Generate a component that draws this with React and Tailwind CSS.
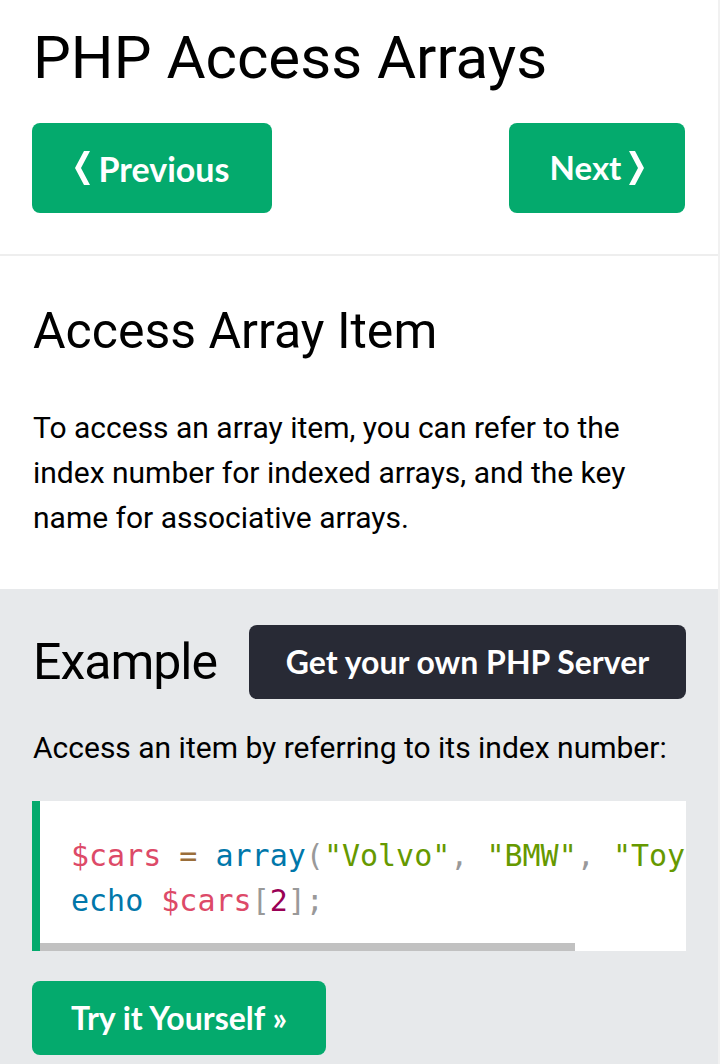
import React from "react";

const btnFont = { fontFamily: "Lato, 'Open Sans', sans-serif" };

function ChevL() {
  return (
    <svg width="15" height="34" viewBox="0 0 15 34" className="shrink-0">
      <polygon points="15,0 9,0 0,17 9,34 15,34 6,17" fill="white" />
    </svg>
  );
}
function ChevR() {
  return (
    <svg width="15" height="34" viewBox="0 0 15 34" className="shrink-0">
      <polygon points="0,0 6,0 15,17 6,34 0,34 9,17" fill="white" />
    </svg>
  );
}

export default function App() {
  return (
    <div className="flex w-[720px] min-h-[1064px] bg-white" style={{ fontFamily: "Roboto, 'Liberation Sans', sans-serif" }}>
      <div className="w-[718px] flex flex-col">
        <div className="px-[33px] pt-[22px] pb-[41px]">
          <h1 className="text-[60px] leading-[72px] font-normal text-black">PHP Access Arrays</h1>
          <div className="mt-[29px] flex justify-between">
            <button className="-ml-px w-[240px] h-[90px] rounded-[8px] bg-[#04AA6D] text-white text-[34px] font-bold flex items-center justify-center gap-[9px]" style={btnFont}>
              <ChevL />
              <span>Previous</span>
            </button>
            <button className="w-[176px] h-[90px] rounded-[8px] bg-[#04AA6D] text-white text-[33px] font-bold flex items-center justify-center gap-[8px]" style={btnFont}>
              <span>Next</span>
              <ChevR />
            </button>
          </div>
        </div>
        <div className="h-[2px] bg-[#eeeeee]" />
        <div className="px-[33px] pt-[44px] pb-[49px]">
          <h2 className="text-[50px] leading-[62px] font-normal text-black">Access Array Item</h2>
          <p className="mt-[43px] text-[30px] leading-[45px] text-black">
            To access an array item, you can refer to the index number for indexed arrays, and the key name for associative arrays.
          </p>
        </div>
        <div className="flex-1 bg-[#E7E9EB] px-[32px] pt-[36px] pb-[8px]">
          <div className="flex items-center justify-between">
            <h2 className="pl-px text-[50px] leading-[62px] tracking-[-1px] font-normal text-black">Example</h2>
            <button className="w-[437px] h-[74px] rounded-[8px] bg-[#282A35] text-white text-[32px] font-bold flex items-center justify-center" style={btnFont}>
              Get your own PHP Server
            </button>
          </div>
          <p className="mt-[26px] pl-px text-[30px] leading-[45px] text-black">Access an item by referring to its index number:</p>
          <div className="mt-[31px] bg-white border-l-[8px] border-[#04AA6D] overflow-hidden">
            <div className="pl-[31px] pt-[32px] pb-[20px] whitespace-nowrap text-[30px] leading-[45px]" style={{ fontFamily: "'DejaVu Sans Mono', 'Liberation Mono', monospace" }}>
              <div>
                <span className="text-[#DD4A68]">$cars</span>
                <span className="text-[#9a6e3a]"> = </span>
                <span className="text-[#0077aa]">array</span>
                <span className="text-[#999999]">(</span>
                <span className="text-[#669900]">"Volvo"</span>
                <span className="text-[#999999]">, </span>
                <span className="text-[#669900]">"BMW"</span>
                <span className="text-[#999999]">, </span>
                <span className="text-[#669900]">"Toyota"</span>
                <span className="text-[#999999]">);</span>
              </div>
              <div>
                <span className="text-[#0077aa]">echo</span>
                <span> </span>
                <span className="text-[#DD4A68]">$cars</span>
                <span className="text-[#999999]">[</span>
                <span className="text-[#990055]">2</span>
                <span className="text-[#999999]">];</span>
              </div>
            </div>
            <div className="h-[8px] w-[535px] bg-[#c1c1c1]" />
          </div>
          <button className="mt-[30px] w-[294px] h-[74px] rounded-[8px] bg-[#04AA6D] text-white text-[32px] font-bold flex items-center justify-center" style={btnFont}>
            Try it Yourself »
          </button>
        </div>
      </div>
      <div className="w-[2px] bg-[#f1f1f1]" />
    </div>
  );
}
